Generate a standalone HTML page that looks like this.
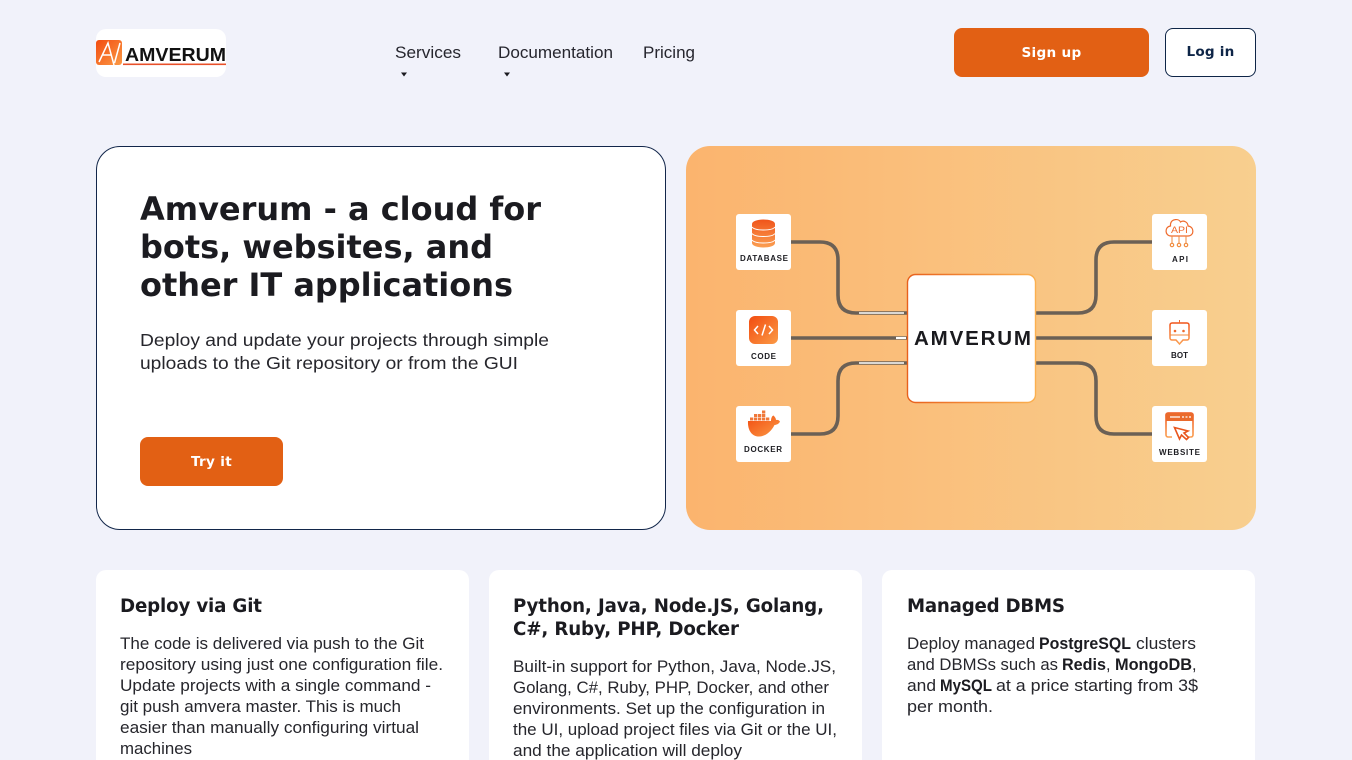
<!DOCTYPE html>
<html lang="en">
<head>
<meta charset="utf-8">
<title>Amverum</title>
<style>
html,body{margin:0;padding:0;width:1352px;height:760px;overflow:hidden;background:#f1f2fa}
body{position:relative;font-family:"Liberation Sans",sans-serif;color:#1b1b20}
.a{position:absolute;box-sizing:border-box}
.btn{display:block;background:#e26014;border-radius:8px;color:#fff;text-align:center;font:bold 13.6px/50px "DejaVu Sans",sans-serif;text-decoration:none;letter-spacing:.3px}
svg.page{position:absolute;left:0;top:0}
.b{font-family:"Liberation Sans",sans-serif;font-size:16.3px;fill:#26262c}
.bb{font-family:"Liberation Sans",sans-serif;font-size:16.3px;font-weight:bold;fill:#1b1b20}
.h{font-family:"DejaVu Sans",sans-serif;font-weight:bold;font-size:18.2px;fill:#1b1b20}
.t{font-family:"DejaVu Sans",sans-serif;font-weight:bold;font-size:32px;fill:#1b1b20}
.n{font-family:"Liberation Sans",sans-serif;font-size:17px;fill:#26262e}
.p{font-family:"Liberation Sans",sans-serif;font-size:17.6px;fill:#26262c}
.l{font-family:"Liberation Sans",sans-serif;font-weight:bold;font-size:8px;fill:#1d1d22}
</style>
</head>
<body>
<div class="a" style="left:96px;top:29px;width:130px;height:48px;background:#fff;border-radius:10px"></div>
<div class="a" style="left:96px;top:146px;width:570px;height:384px;background:#fff;border:1px solid #12264a;border-radius:24px"></div>
<div class="a" style="left:686px;top:146px;width:570px;height:384px;border-radius:24px;background:linear-gradient(90deg,#fbb46e,#f8cf8f)"></div>
<div class="a" style="left:96px;top:570px;width:373px;height:220px;background:#fff;border-radius:10px"></div>
<div class="a" style="left:489px;top:570px;width:373px;height:220px;background:#fff;border-radius:10px"></div>
<div class="a" style="left:882px;top:570px;width:373px;height:220px;background:#fff;border-radius:10px"></div>
<a class="a btn" href="#" style="left:954px;top:28px;width:195px;height:49px">Sign up</a>
<a class="a btn" href="#" style="left:1165px;top:28px;width:91px;height:49px;background:#fff;border:1px solid #0e2547;color:#0e2547;line-height:47px;letter-spacing:.2px">Log in</a>
<a class="a btn" href="#" style="left:140px;top:437px;width:143px;height:49px">Try it</a>

<svg class="page" width="1352" height="760" viewBox="0 0 1352 760" xmlns="http://www.w3.org/2000/svg">
<defs>
<linearGradient id="g" x1="0" y1="0" x2="1" y2="1"><stop offset="0" stop-color="#f24c10"/><stop offset="1" stop-color="#fb9a45"/></linearGradient>
<linearGradient id="gv" x1="0" y1="0" x2="0" y2="1"><stop offset="0" stop-color="#f0541a"/><stop offset="1" stop-color="#fb9f52"/></linearGradient>
<linearGradient id="gb" x1="0" y1="0" x2="1" y2="0"><stop offset="0" stop-color="#e8601c"/><stop offset="1" stop-color="#fbb04f"/></linearGradient>
</defs>

<!-- logo -->
<rect x="96" y="40" width="26" height="25" rx="3" fill="url(#g)"/>
<path d="M99 62L108 43L114 65M103 55H111M114.500 63L120 43" fill="none" stroke="#fff" stroke-width="1.500"/>
<text x="125" y="61" font-family="Liberation Sans,sans-serif" font-weight="bold" font-size="18" fill="#111" textLength="101" lengthAdjust="spacingAndGlyphs">AMVERUM</text>
<rect x="123" y="63.500" width="103" height="1.600" fill="#e8502a"/>

<!-- nav -->
<text class="n" x="395" y="58" textLength="66" lengthAdjust="spacingAndGlyphs">Services</text>
<text class="n" x="498" y="58" textLength="115" lengthAdjust="spacingAndGlyphs">Documentation</text>
<text class="n" x="643" y="58" textLength="52" lengthAdjust="spacingAndGlyphs">Pricing</text>
<path d="M401 72.500h6l-3 4z" fill="#1b1b20"/>
<path d="M504 72.500h6l-3 4z" fill="#1b1b20"/>

<!-- hero -->
<text class="t" x="140" y="220" textLength="401">Amverum - a cloud for</text>
<text class="t" x="140" y="258" textLength="353">bots, websites, and</text>
<text class="t" x="140" y="296" textLength="373">other IT applications</text>
<text class="p" x="140" y="346" textLength="409" lengthAdjust="spacingAndGlyphs">Deploy and update your projects through simple</text>
<text class="p" x="140" y="369" textLength="378" lengthAdjust="spacingAndGlyphs">uploads to the Git repository or from the GUI</text>

<!-- diagram lines -->
<g fill="none" stroke="#6b6055" stroke-width="3.600">
<path d="M791 242H820Q838 242 838 260V295Q838 313 856 313H907"/>
<path d="M791 338H907"/>
<path d="M791 434H820Q838 434 838 416V381Q838 363 856 363H907"/>
<path d="M1036 313H1078Q1096 313 1096 295V260Q1096 242 1114 242H1152"/>
<path d="M1036 338H1152"/>
<path d="M1036 363H1078Q1096 363 1096 381V416Q1096 434 1114 434H1152"/>
</g>
<g stroke="#fff" stroke-width="1.600">
<path d="M859 313H904M859 363H904"/>
<path d="M896 338H906" stroke-width="2.200"/>
</g>
<rect x="907.500" y="274.500" width="128" height="128" rx="8" fill="#fff" stroke="url(#gb)" stroke-width="1.400"/>
<text x="914" y="345" font-family="Liberation Sans,sans-serif" font-weight="bold" font-size="20.500" fill="#1a1a1e" textLength="117">AMVERUM</text>

<!-- tiles -->
<g fill="#fff">
<rect x="736" y="214" width="55" height="56" rx="3"/>
<rect x="736" y="310" width="55" height="56" rx="3"/>
<rect x="736" y="406" width="55" height="56" rx="3"/>
<rect x="1152" y="214" width="55" height="56" rx="3"/>
<rect x="1152" y="310" width="55" height="56" rx="3"/>
<rect x="1152" y="406" width="55" height="56" rx="3"/>
</g>

<!-- database -->
<path d="M752 224c0-6 23-6 23 0v19c0 6-23 6-23 0z" fill="url(#gv)"/>
<path d="M752 227c3 4 20 4 23 0M752 233.500c3 4 20 4 23 0M752 240c3 4 20 4 23 0" fill="none" stroke="#fff" stroke-width="1"/>
<text class="l" x="740" y="261" textLength="48">DATABASE</text>

<!-- code -->
<rect x="749" y="316" width="29" height="28" rx="6" fill="url(#g)"/>
<path d="M758 326l-3.500 4 3.500 4M769 326l3.500 4-3.500 4M765.500 324.500l-3.500 11" fill="none" stroke="#fff" stroke-width="1.500"/>
<text class="l" x="751" y="359" textLength="25">CODE</text>

<!-- docker -->
<g fill="#f0783a">
<rect x="750" y="417.500" width="3.300" height="3"/><rect x="754" y="417.500" width="3.300" height="3"/><rect x="758" y="417.500" width="3.300" height="3"/><rect x="762" y="417.500" width="3.300" height="3"/><rect x="766" y="417.500" width="3.300" height="3"/>
<rect x="754" y="414" width="3.300" height="3"/><rect x="758" y="414" width="3.300" height="3"/><rect x="762" y="414" width="3.300" height="3"/>
<rect x="762" y="410.500" width="3.300" height="3"/>
</g>
<path d="M748 421H771C771 418 772 416 773.500 415.500C775 417 776 418.500 776 420C777.500 419.500 779 420 780 421.500C779 424 776 425 774.500 425C771 432 765 436.500 759 436.500C751 436.500 747.500 429 748 421z" fill="url(#g)"/>
<text class="l" x="744" y="452" textLength="38">DOCKER</text>

<!-- api -->
<path d="M1171 236h17c6.500 0 6.500-9.500 0-10c0-4-4.500-6-7.500-4c-1.500-3.500-9-3.500-10 2c0 .5 0 1.500 0 2c-6 .5-6 10 .5 10z" fill="none" stroke="#ef6a2c" stroke-width="1.200"/>
<text x="1171" y="233" font-family="Liberation Sans,sans-serif" font-size="9" fill="#ef6a2c" textLength="17" lengthAdjust="spacingAndGlyphs">API</text>
<path d="M1172 236v7M1179 236v7M1186 236v7" fill="none" stroke="#f08a3c" stroke-width="1"/>
<g fill="none" stroke="#f08a3c" stroke-width="1.200"><circle cx="1172" cy="245" r="1.700"/><circle cx="1179" cy="245" r="1.700"/><circle cx="1186" cy="245" r="1.700"/></g>
<text class="l" x="1172" y="262" textLength="16">API</text>

<!-- bot -->
<path d="M1172 323h15a2 2 0 0 1 2 2v13a2 2 0 0 1-2 2h-4l-3.500 4-3.500-4h-4a2 2 0 0 1-2-2v-13a2 2 0 0 1 2-2z" fill="none" stroke="url(#gv)" stroke-width="1.500"/>
<path d="M1179.500 323v-3" stroke="#ef6a2c" stroke-width="1"/>
<path d="M1170 335h19" stroke="#f08a3c" stroke-width="1"/>
<circle cx="1175" cy="331" r="1.300" fill="#ef6a2c"/><circle cx="1183.500" cy="331" r="1.300" fill="#ef6a2c"/>
<text class="l" x="1171" y="358" textLength="17">BOT</text>

<!-- website -->
<path d="M1172 437h-4a2 2 0 0 1-2-2v-20a2 2 0 0 1 2-2h23a2 2 0 0 1 2 2v20a2 2 0 0 1-2 2h-3" fill="none" stroke="url(#gv)" stroke-width="1.600"/>
<rect x="1166" y="413" width="27" height="8" fill="#ea6a2c"/>
<path d="M1170 417h10M1182 417h2M1185.500 417h2M1189 417h2" stroke="#fff" stroke-width="1.200"/>
<path d="M1174.500 427.500l5 11.500 2-4 5 4.500 2-2-4.500-4.500 4-2z" fill="none" stroke="#e8561e" stroke-width="1.600"/>
<text class="l" x="1159" y="455" textLength="41">WEBSITE</text>

<!-- card 1 -->
<text class="h" x="120" y="612" textLength="142">Deploy via Git</text>
<text class="b" x="120" y="649" textLength="304" lengthAdjust="spacingAndGlyphs">The code is delivered via push to the Git</text>
<text class="b" x="120" y="670" textLength="323" lengthAdjust="spacingAndGlyphs">repository using just one configuration file.</text>
<text class="b" x="120" y="691" textLength="311" lengthAdjust="spacingAndGlyphs">Update projects with a single command -</text>
<text class="b" x="120" y="712" textLength="281" lengthAdjust="spacingAndGlyphs">git push amvera master. This is much</text>
<text class="b" x="120" y="733" textLength="299" lengthAdjust="spacingAndGlyphs">easier than manually configuring virtual</text>
<text class="b" x="120" y="754" textLength="72" lengthAdjust="spacingAndGlyphs">machines</text>

<!-- card 2 -->
<text class="h" x="513" y="612" textLength="311">Python, Java, Node.JS, Golang,</text>
<text class="h" x="513" y="635" textLength="226">C#, Ruby, PHP, Docker</text>
<text class="b" x="513" y="672" textLength="323" lengthAdjust="spacingAndGlyphs">Built-in support for Python, Java, Node.JS,</text>
<text class="b" x="513" y="693" textLength="316" lengthAdjust="spacingAndGlyphs">Golang, C#, Ruby, PHP, Docker, and other</text>
<text class="b" x="513" y="714" textLength="312" lengthAdjust="spacingAndGlyphs">environments. Set up the configuration in</text>
<text class="b" x="513" y="735" textLength="324" lengthAdjust="spacingAndGlyphs">the UI, upload project files via Git or the UI,</text>
<text class="b" x="513" y="756" textLength="229" lengthAdjust="spacingAndGlyphs">and the application will deploy</text>

<!-- card 3 -->
<text class="h" x="907" y="612" textLength="158">Managed DBMS</text>
<text class="b" x="907" y="649" textLength="128" lengthAdjust="spacingAndGlyphs">Deploy managed</text>
<text class="bb" x="1039" y="649" textLength="92" lengthAdjust="spacingAndGlyphs">PostgreSQL</text>
<text class="b" x="1136" y="649" textLength="60" lengthAdjust="spacingAndGlyphs">clusters</text>
<text class="b" x="907" y="670" textLength="151" lengthAdjust="spacingAndGlyphs">and DBMSs such as</text>
<text class="bb" x="1062" y="670" textLength="44" lengthAdjust="spacingAndGlyphs">Redis</text>
<text class="b" x="1106" y="670">,</text>
<text class="bb" x="1115" y="670" textLength="77" lengthAdjust="spacingAndGlyphs">MongoDB</text>
<text class="b" x="1192" y="670">,</text>
<text class="b" x="907" y="691" textLength="29" lengthAdjust="spacingAndGlyphs">and</text>
<text class="bb" x="940" y="691" textLength="52" lengthAdjust="spacingAndGlyphs">MySQL</text>
<text class="b" x="996" y="691" textLength="202" lengthAdjust="spacingAndGlyphs">at a price starting from 3$</text>
<text class="b" x="907" y="712" textLength="86" lengthAdjust="spacingAndGlyphs">per month.</text>
</svg>
</body>
</html>
